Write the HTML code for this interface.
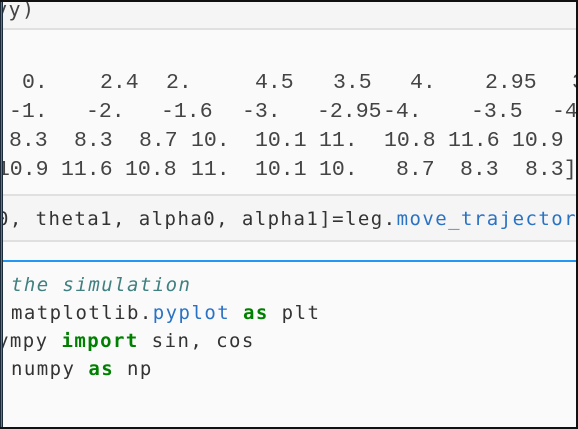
<!DOCTYPE html>
<html><head><meta charset="utf-8"><style>
html,body{margin:0;padding:0}
body{width:578px;height:429px;position:relative;overflow:hidden;background:#fafafa;font-family:"Liberation Mono",monospace}
.abs{position:absolute;white-space:pre}
.out{font-family:"Liberation Mono",monospace;font-size:21.5px;color:#444;line-height:20px}
.code{font-family:"DejaVu Sans Mono",monospace;font-size:19px;letter-spacing:1.45px;color:#333;line-height:22px}
.k{color:#008000;font-weight:bold}
.b{color:#2a72c4}
.c{color:#408080;font-style:italic}
</style></head><body>
<div class="abs" style="left:0;top:0;width:578px;height:28px;background:#f5f5f5;border-bottom:2px solid #e0e0e0"></div>
<div class="abs code" style="left:-5px;top:-2px;font-size:20px;color:#444">yy)</div>

<div class="abs out" style="left:0;top:73px"><span class="abs" style="left:22px">0.</span><span class="abs" style="left:100px">2.4</span><span class="abs" style="left:166px">2.</span><span class="abs" style="left:255px">4.5</span><span class="abs" style="left:333px">3.5</span><span class="abs" style="left:410px">4.</span><span class="abs" style="left:485px">2.95</span><span class="abs" style="left:572px">3</span></div>
<div class="abs out" style="left:0;top:102px"><span class="abs" style="left:9px">-1.</span><span class="abs" style="left:86px">-2.</span><span class="abs" style="left:161px">-1.6</span><span class="abs" style="left:242px">-3.</span><span class="abs" style="left:317px">-2.95</span><span class="abs" style="left:383px">-4.</span><span class="abs" style="left:471px">-3.5</span><span class="abs" style="left:552px">-4</span></div>
<div class="abs out" style="left:0;top:131px"><span class="abs" style="left:9px">8.3</span><span class="abs" style="left:74px">8.3</span><span class="abs" style="left:139px">8.7</span><span class="abs" style="left:191px">10.</span><span class="abs" style="left:255px">10.1</span><span class="abs" style="left:319px">11.</span><span class="abs" style="left:384px">10.8</span><span class="abs" style="left:448px">11.6</span><span class="abs" style="left:512px">10.9</span></div>
<div class="abs out" style="left:0;top:160px"><span class="abs" style="left:-16px">[10.9</span><span class="abs" style="left:61px">11.6</span><span class="abs" style="left:125px">10.8</span><span class="abs" style="left:191px">11.</span><span class="abs" style="left:255px">10.1</span><span class="abs" style="left:319px">10.</span><span class="abs" style="left:396px">8.7</span><span class="abs" style="left:460px">8.3</span><span class="abs" style="left:525px">8.3]</span></div>

<div class="abs" style="left:0;top:194px;width:578px;height:44px;background:#f5f5f5;border-top:2px solid #e0e0e0;border-bottom:2px solid #e0e0e0"></div>
<div class="abs code" style="left:-3px;top:208px">0, theta1, alpha0, alpha1]=leg.<span class="b">move_trajectory</span></div>

<div class="abs" style="left:0;top:260px;width:578px;height:2px;background:#2196f3"></div>
<div class="abs code" style="left:11px;top:274px"><span class="c">the simulation</span></div>
<div class="abs code" style="left:11px;top:302px">matplotlib.<span class="b">pyplot</span> <span class="k">as</span> plt</div>
<div class="abs code" style="left:-3px;top:330px">ympy <span class="k">import</span> sin, cos</div>
<div class="abs code" style="left:11px;top:358px">numpy <span class="k">as</span> np</div>

<div class="abs" style="left:0;top:0;width:3px;height:429px;background:#1c2b3a"></div>
<div class="abs" style="left:1px;top:0;width:1px;height:429px;background:#3a7fc0"></div>
<div class="abs" style="left:0;top:0;width:578px;height:2px;background:#111"></div>
<div class="abs" style="left:576px;top:0;width:2px;height:429px;background:#111"></div>
<div class="abs" style="left:0;top:427px;width:578px;height:2px;background:#111"></div>
</body></html>
